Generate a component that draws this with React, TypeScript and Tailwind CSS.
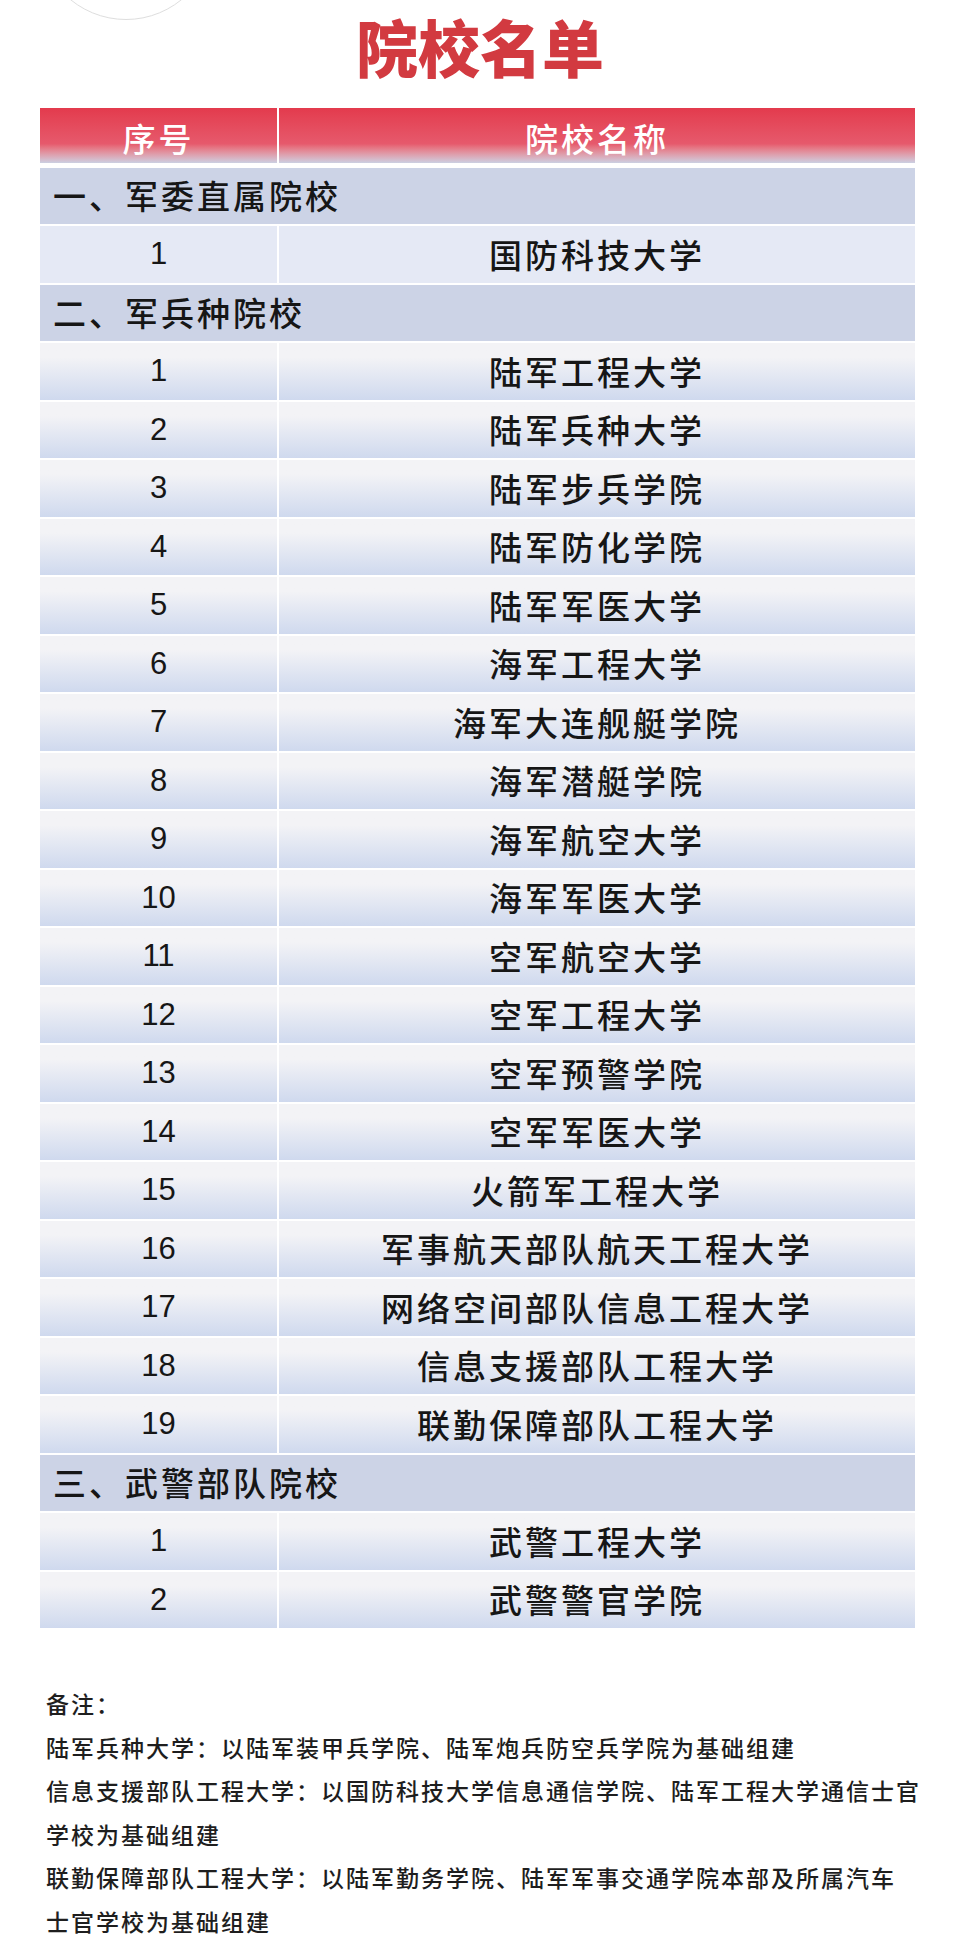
import React from 'react';

const CJK = { fontFamily: '"Noto Sans CJK SC", "Noto Sans", sans-serif' };

type Row =
  | { kind: 'section'; title: string }
  | { kind: 'item'; no: number; name: string; flat?: boolean };

const App = () => {
  // Table rows, grouped by section
  const rows: Row[] = [
    { kind: 'section', title: '一、军委直属院校' },
    { kind: 'item', no: 1, name: '国防科技大学', flat: true },
    { kind: 'section', title: '二、军兵种院校' },
    { kind: 'item', no: 1, name: '陆军工程大学' },
    { kind: 'item', no: 2, name: '陆军兵种大学' },
    { kind: 'item', no: 3, name: '陆军步兵学院' },
    { kind: 'item', no: 4, name: '陆军防化学院' },
    { kind: 'item', no: 5, name: '陆军军医大学' },
    { kind: 'item', no: 6, name: '海军工程大学' },
    { kind: 'item', no: 7, name: '海军大连舰艇学院' },
    { kind: 'item', no: 8, name: '海军潜艇学院' },
    { kind: 'item', no: 9, name: '海军航空大学' },
    { kind: 'item', no: 10, name: '海军军医大学' },
    { kind: 'item', no: 11, name: '空军航空大学' },
    { kind: 'item', no: 12, name: '空军工程大学' },
    { kind: 'item', no: 13, name: '空军预警学院' },
    { kind: 'item', no: 14, name: '空军军医大学' },
    { kind: 'item', no: 15, name: '火箭军工程大学' },
    { kind: 'item', no: 16, name: '军事航天部队航天工程大学' },
    { kind: 'item', no: 17, name: '网络空间部队信息工程大学' },
    { kind: 'item', no: 18, name: '信息支援部队工程大学' },
    { kind: 'item', no: 19, name: '联勤保障部队工程大学' },
    { kind: 'section', title: '三、武警部队院校' },
    { kind: 'item', no: 1, name: '武警工程大学' },
    { kind: 'item', no: 2, name: '武警警官学院' },
  ];

  // Notes under the table
  const notes = [
    '备注：',
    '陆军兵种大学：以陆军装甲兵学院、陆军炮兵防空兵学院为基础组建',
    '信息支援部队工程大学：以国防科技大学信息通信学院、陆军工程大学通信士官',
    '学校为基础组建',
    '联勤保障部队工程大学：以陆军勤务学院、陆军军事交通学院本部及所属汽车',
    '士官学校为基础组建',
  ];

  return (
    <div className="relative w-[960px] h-[1953px] bg-white overflow-hidden" style={CJK}>
      {/* faint circle in the top corner */}
      <div className="absolute left-[38px] top-[-156px] w-[176px] h-[176px] rounded-full border-[1.5px] border-[#dedede]" />

      {/* Title */}
      <div className="pt-[9px] flex justify-center">
        <h1 className="text-[62px] leading-[1.2] font-black text-[#d23a40]">
          院校名单
        </h1>
      </div>

      {/* Table */}
      <div className="mt-[24.6px] ml-[40px] w-[875px]">
        <div className="flex gap-[2px] h-[55px] text-white text-[33px] font-medium tracking-[3px] bg-white">
          <div className="w-[237px] flex items-center justify-center pt-[6px] bg-linear-to-b from-[#e33a4d] via-[#e6596c] via-65% to-[#cbcfe2]">
            序号
          </div>
          <div className="flex-1 flex items-center justify-center pt-[6px] bg-linear-to-b from-[#e33a4d] via-[#e6596c] via-65% to-[#cbcfe2]">
            院校名称
          </div>
        </div>

        <div className="mt-[5px] flex flex-col gap-[2px]">
          {rows.map((row, i) =>
            row.kind === 'section' ? (
              <div
                key={i}
                className="h-[56.5px] flex items-center pl-[13px] bg-[#ccd3e6] text-[33px] font-medium tracking-[3px] text-[#161616]"
              >
                {row.title}
              </div>
            ) : (
              <div key={i} className="h-[56.5px] flex gap-[2px] text-[#161616]">
                <div
                  className={
                    row.flat
                      ? 'w-[237px] flex items-center justify-center bg-[#e5e9f5] text-[31px]'
                      : 'w-[237px] flex items-center justify-center bg-linear-to-b from-[#f3f3f6] from-25% to-[#cfd9ee] text-[31px]'
                  }
                  style={{ fontFamily: '"Liberation Sans", Arial, sans-serif' }}
                >
                  {row.no}
                </div>
                <div
                  className={
                    row.flat
                      ? 'flex-1 flex items-center justify-center bg-[#e5e9f5] text-[33px] font-medium tracking-[3px]'
                      : 'flex-1 flex items-center justify-center bg-linear-to-b from-[#f3f3f6] from-25% to-[#cfd9ee] text-[33px] font-medium tracking-[3px]'
                  }
                >
                  {row.name}
                </div>
              </div>
            )
          )}
        </div>
      </div>

      {/* Notes */}
      <div className="mt-[54px] ml-[46px] text-[23px] font-medium leading-[43.5px] tracking-[2px] text-[#1e1e1e]">
        {notes.map((line, i) => (
          <p key={i} className="whitespace-nowrap">{line}</p>
        ))}
      </div>
    </div>
  );
};

export default App;
